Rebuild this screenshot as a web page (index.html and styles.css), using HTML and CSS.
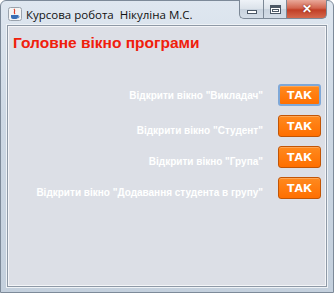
FILE: index.html
```html
<!DOCTYPE html>
<html lang="uk">
<head>
    <meta charset="UTF-8">
    <title>Курсова робота  Нікуліна М.С.</title>
    <link rel="stylesheet" href="styles.css">
</head>
<body>
    <div class="window">
        <div class="titlebar">
            <div class="app-icon">
                <svg width="14" height="14" viewBox="0 0 14 14">
                    <rect x="0.5" y="0.5" width="13" height="13" rx="2" fill="#f4f4f4" stroke="#9aa3ad"/>
                    <path d="M6 2 C8 4 5 5 7 7" stroke="#e0402a" stroke-width="1.2" fill="none"/>
                    <path d="M3 8 h7 v2 a2 2 0 0 1 -2 2 h-3 a2 2 0 0 1 -2 -2 z" fill="#3a6fb5"/>
                    <path d="M10 8.5 a1.3 1.3 0 0 1 0 2.5" stroke="#3a6fb5" fill="none"/>
                </svg>
            </div>
            <div class="window-title">Курсова робота&nbsp; Нікуліна М.С.</div>
            <div class="caption-buttons">
                <div class="cap-btn cap-min"><span class="min-glyph"></span></div>
                <div class="cap-btn cap-max"><span class="max-glyph"></span></div>
                <div class="cap-btn cap-close">&#10005;</div>
            </div>
        </div>

        <div class="content">
            <h1 class="main-title">Головне вікно програми</h1>

            <div class="rows">
                <div class="row">
                    <span class="row-label">Відкрити вікно "Викладач"</span>
                    <button class="btn-yes focused">ТАК</button>
                </div>
                <div class="row low">
                    <span class="row-label">Відкрити вікно "Студент"</span>
                    <button class="btn-yes">ТАК</button>
                </div>
                <div class="row low">
                    <span class="row-label">Відкрити вікно "Група"</span>
                    <button class="btn-yes">ТАК</button>
                </div>
                <div class="row low">
                    <span class="row-label">Відкрити вікно "Додавання студента в групу"</span>
                    <button class="btn-yes">ТАК</button>
                </div>
            </div>
        </div>
    </div>
</body>
</html>
```

FILE: styles.css
```css
* {
    box-sizing: border-box;
    margin: 0;
    padding: 0;
}

body {
    width: 334px;
    height: 293px;
    overflow: hidden;
    font-family: "Liberation Sans", Arial, sans-serif;
    background: #fff;
}

.window {
    width: 334px;
    height: 293px;
    display: flex;
    flex-direction: column;
    background: linear-gradient(180deg, #dfe7f0 0%, #cdd8e4 40%, #c4d0dd 100%);
    border: 1px solid #7d8a99;
    border-radius: 6px 6px 0 0;
    padding: 0 6px 5px 6px;
}

.titlebar {
    height: 24px;
    display: flex;
    align-items: flex-start;
    flex-shrink: 0;
}

.app-icon {
    margin: 6px 0 0 1px;
    width: 14px;
    height: 14px;
}

.window-title {
    margin: 6px 0 0 4px;
    font-family: "Open Sans", "Liberation Sans", sans-serif;
    font-size: 11.5px;
    color: #111;
    white-space: nowrap;
    flex: 1;
}

.caption-buttons {
    display: flex;
    margin-top: -1px;
}

.cap-btn {
    height: 19px;
    display: flex;
    align-items: center;
    justify-content: center;
    border: 1px solid #7c8896;
    border-top: none;
    background: linear-gradient(180deg, #eef2f7 0%, #dbe2ea 50%, #c9d3de 51%, #d4dde7 100%);
}

.cap-min {
    width: 24px;
    border-radius: 0 0 0 5px;
    border-right: none;
}

.cap-max {
    width: 24px;
}

.cap-close {
    width: 40px;
    border-left: none;
    border-radius: 0 0 5px 0;
    background: linear-gradient(180deg, #e9a99a 0%, #d2654f 45%, #c13f26 55%, #d5694d 100%);
    color: #fff;
    font-size: 12px;
    font-weight: bold;
    text-shadow: 0 0 2px #6d1a0c;
}

.min-glyph {
    width: 10px;
    height: 4px;
    margin-top: 5px;
    background: #fff;
    border: 1px solid #4c5866;
}

.max-glyph {
    width: 11px;
    height: 9px;
    background: #fff;
    border: 1px solid #4c5866;
    border-top-width: 3px;
    box-shadow: inset 0 0 0 1px #fff, inset 0 0 0 2px #4c5866;
}

.content {
    flex: 1;
    background: #dcdfe6;
    border: 1px solid #8e99a6;
    box-shadow: 0 0 0 1px #eef2f6, inset 0 0 0 1px #f4f5f8;
    padding: 8px 5px 0 5px;
}

.main-title {
    font-family: "Liberation Sans", sans-serif;
    font-size: 15.5px;
    font-weight: bold;
    color: #f0200c;
    margin-bottom: 32px;
}

.rows {
    display: flex;
    flex-direction: column;
    gap: 9px;
}

.row {
    display: flex;
    justify-content: flex-end;
    align-items: center;
    gap: 15px;
}

.row-label {
    font-family: "Liberation Sans", sans-serif;
    font-size: 10px;
    font-weight: bold;
    color: #fff;
    white-space: nowrap;
}

.row.low .row-label {
    padding-top: 9px;
}

.btn-yes {
    width: 43px;
    height: 22px;
    border: 1px solid #c25505;
    border-radius: 3px;
    background: linear-gradient(180deg, #ff8a1e 0%, #ff6f00 100%);
    color: #fff;
    font-family: "DejaVu Sans", sans-serif;
    font-size: 11px;
    font-weight: bold;
    box-shadow: inset 0 1px 0 rgba(255, 255, 255, 0.25);
}

.btn-yes.focused {
    border: 2px solid #7fa8d8;
}
```
